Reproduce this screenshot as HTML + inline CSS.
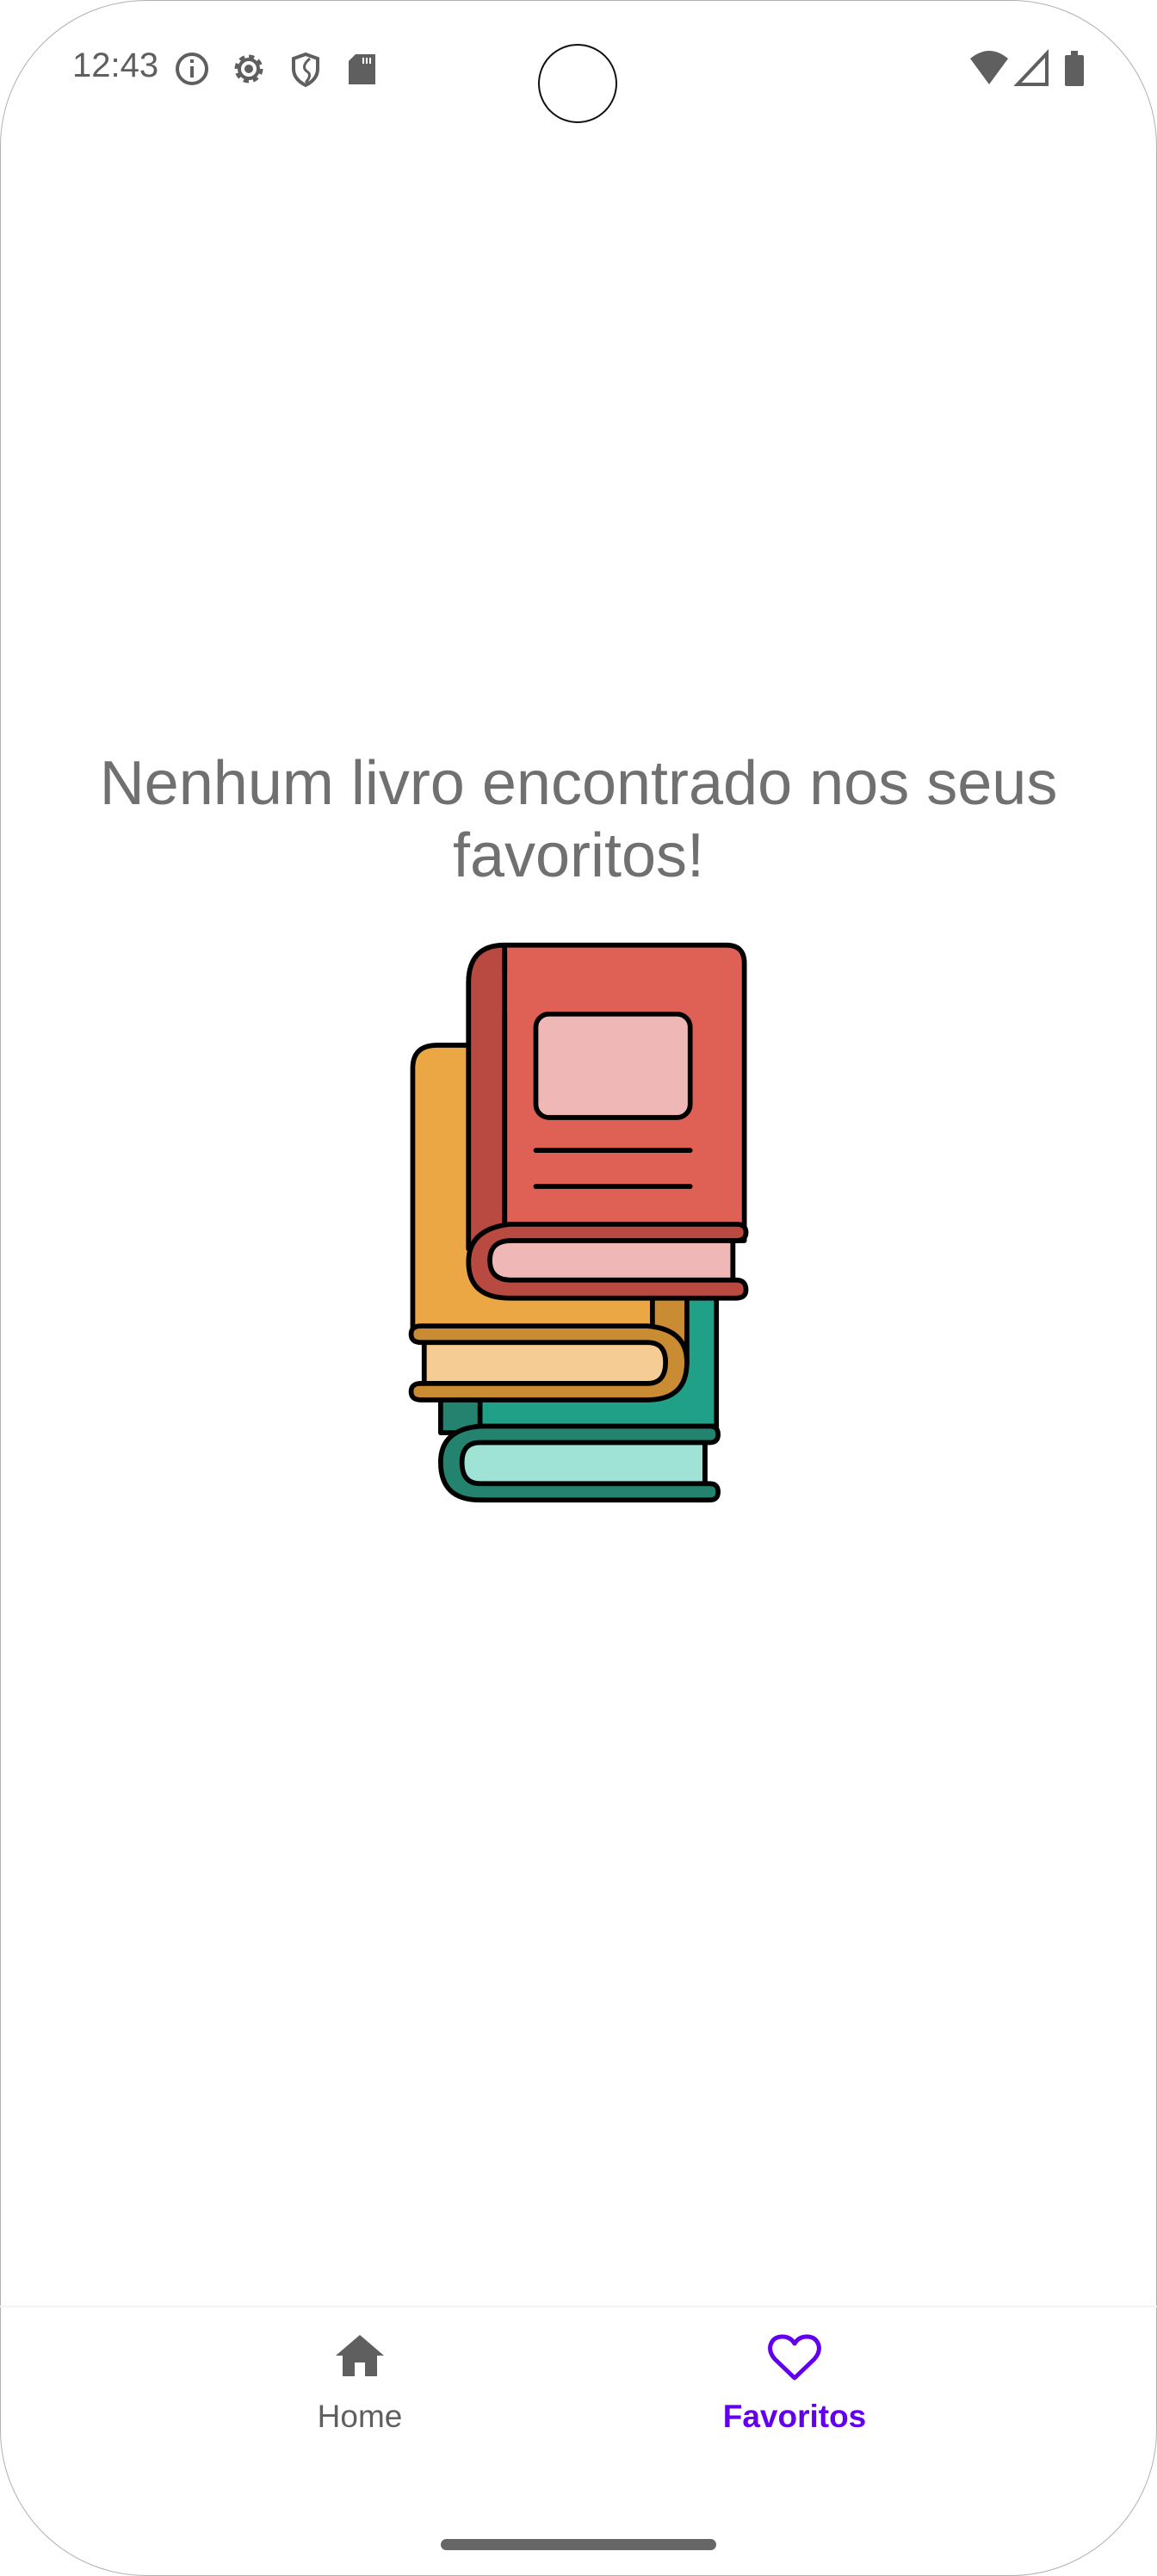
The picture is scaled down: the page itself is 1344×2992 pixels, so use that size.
<!DOCTYPE html>
<html><head><meta charset="utf-8">
<style>
html,body{margin:0;padding:0;background:#fff;}
body{width:1344px;height:2992px;position:relative;overflow:hidden;font-family:"Liberation Sans",Roboto,sans-serif;}
.frame{position:absolute;left:0;top:0;width:1342px;height:2990px;border:1px solid #b0b0b0;border-radius:170px;}
.abs{position:absolute;}
.msg{position:absolute;left:0;width:1344px;top:868px;text-align:center;font-size:72px;line-height:84px;color:#707070;}
.nav{position:absolute;left:0;top:2678px;width:1344px;height:200px;border-top:2px solid #f3f3f3;}
.lbl{position:absolute;top:2786px;width:300px;text-align:center;font-size:37px;}
</style></head><body>
<div class="frame"></div>
<!-- status bar -->
<div class="abs" style="left:84px;top:54px;font-size:40px;color:#5f5f5f;">12:43</div>
<svg class="abs" style="left:200px;top:58px" width="240" height="44" viewBox="0 0 240 44">
 <circle cx="23" cy="22" r="17" fill="none" stroke="#5f5f5f" stroke-width="4"/>
 <rect x="21" y="19" width="4" height="13" fill="#5f5f5f"/><rect x="21" y="11" width="4" height="4" fill="#5f5f5f"/>
 <g transform="translate(89,22)" fill="#5f5f5f">
  <circle r="14" fill="none" stroke="#5f5f5f" stroke-width="5" stroke-dasharray="6 5"/>
  <circle r="11" fill="none" stroke="#5f5f5f" stroke-width="4"/>
  <circle r="5"/>
 </g>
 <path d="M155 5 L169 10 V22 Q169 34 155 41 Q141 34 141 22 V10 Z" fill="none" stroke="#5f5f5f" stroke-width="4"/>
 <path d="M160 10 Q148 20 158 26 Q162 30 155 38" fill="none" stroke="#5f5f5f" stroke-width="3"/>
 <path d="M213 5 H236 V40 H205 V13 Z" fill="#5f5f5f"/>
 <rect x="221" y="9" width="2" height="7" fill="#fff"/><rect x="225" y="9" width="2" height="7" fill="#fff"/><rect x="229" y="9" width="2" height="7" fill="#fff"/>
</svg>
<svg class="abs" style="left:1124px;top:56px" width="150" height="46" viewBox="0 0 150 46">
 <path d="M3 12 Q25 -6 47 12 L25 42 Z" fill="#5f5f5f"/>
 <path d="M92 6 V42 H58 Z" fill="none" stroke="#5f5f5f" stroke-width="4" stroke-linejoin="miter"/>
 <rect x="113" y="8" width="22" height="36" rx="2" fill="#5f5f5f"/><rect x="120" y="3" width="8" height="6" fill="#5f5f5f"/>
</svg>
<div class="abs" style="left:625px;top:51px;width:92px;height:92px;border-radius:50%;border:2px solid #111;box-sizing:border-box;"></div>

<div class="msg">Nenhum livro encontrado nos seus<br>favoritos!</div>

<svg class="abs" style="left:468px;top:1084px" width="410" height="672" viewBox="245 568 215 352">
 <g stroke="#000" stroke-width="3" stroke-linejoin="round" stroke-linecap="round">
  <!-- green -->
  <rect x="268" y="780" width="168" height="92" fill="#20a187"/>
  <rect x="268" y="780" width="24" height="92" fill="#23836f"/>
  <path d="M436 868 H292 Q268 870 268 890 Q268 913 292 913 H432 Q437 913 437 908 Q437 903 432 903 H429 V878 H432 Q437 878 437 873 Q437 868 432 868 Z" fill="#23836f"/>
  <path d="M429 878 H292 Q281 878 281 890 Q281 903 292 903 H429 Z" fill="#9fe3d6"/>
  <!-- yellow -->
  <path d="M251 808 V650 Q251 636 266 636 H397 V808 Z" fill="#eba744"/>
  <path d="M397 780 H418 V830 H397 Z" fill="#c98c33"/>
  <path d="M256 807 H394 Q418 809 418 829 Q418 852 394 852 H256 Q250 852 250 847 Q250 842 256 842 H258 V817 H256 Q250 817 250 812 Q250 807 256 807 Z" fill="#c98c33"/>
  <path d="M258 817 H394 Q405 817 405 829 Q405 842 394 842 H258 Z" fill="#f4cc94"/>
  <!-- red -->
  <path d="M285 760 V598 Q285 575 308 575 H442 Q453 575 453 586 V755 H285 Z" fill="#df6155"/>
  <path d="M285 760 V598 Q285 575 307 575 V755 Z" fill="#b84a42"/>
  <path d="M307 580 V592 M307 617 V745" fill="none"/>
  <rect x="326" y="617" width="94" height="63" rx="8" fill="#efb8b6"/>
  <path d="M326 700 H420 M326 722 H420" fill="none"/>
  <path d="M448 745 H310 Q285 748 285 768 Q285 790 310 790 H448 Q454 790 454 785 Q454 779 448 779 H446 V755 H448 Q454 755 454 750 Q454 745 448 745 Z" fill="#b84a42"/>
  <path d="M446 755 H311 Q298 755 298 767 Q298 779 311 779 H446 Z" fill="#efb8b6"/>
 </g>
</svg>

<div class="nav"></div>
<svg class="abs" style="left:388px;top:2710px" width="60" height="52" viewBox="0 0 60 52">
 <path d="M30 2 L58 26 H50 V50 H36 V34 H24 V50 H10 V26 H2 Z" fill="#5f5f5f"/>
</svg>
<div class="lbl" style="left:268px;color:#5f5f5f;">Home</div>
<svg class="abs" style="left:892px;top:2710px" width="62" height="56" viewBox="0 0 62 56">
 <path d="M31 52 L8 30 Q1 22 3 14 Q6 4 17 4 Q26 4 31 12 Q36 4 45 4 Q56 4 59 14 Q61 22 54 30 Z" fill="none" stroke="#6200ee" stroke-width="5" stroke-linejoin="round"/>
</svg>
<div class="lbl" style="left:773px;color:#6200ee;font-weight:bold;">Favoritos</div>
<div class="abs" style="left:512px;top:2949px;width:320px;height:13px;border-radius:7px;background:#666;"></div>
</body></html>
